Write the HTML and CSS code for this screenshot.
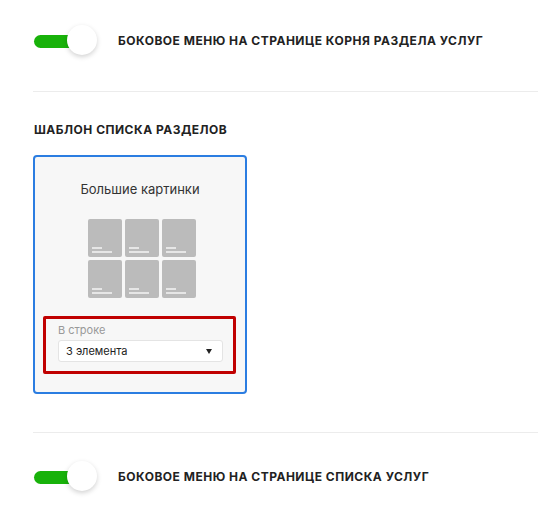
FILE: index.html
```html
<!DOCTYPE html>
<html lang="ru">
<head>
<meta charset="utf-8">
<link rel="stylesheet" href="styles.css">
</head>
<body>
<div class="page">
  <div class="switch-row first">
    <span class="switch"><span class="track"></span><span class="knob"></span></span>
    <span class="switch-label">Боковое меню на странице корня раздела услуг</span>
  </div>
  <div class="divider"></div>
  <div class="section">
    <div class="section-title">Шаблон списка разделов</div>
    <div class="card">
      <div class="card-title">Большие картинки</div>
      <div class="tiles">
        <div class="tile"><i class="l1"></i><i class="l2"></i></div>
        <div class="tile"><i class="l1"></i><i class="l2"></i></div>
        <div class="tile"><i class="l1"></i><i class="l2"></i></div>
        <div class="tile"><i class="l1"></i><i class="l2"></i></div>
        <div class="tile"><i class="l1"></i><i class="l2"></i></div>
        <div class="tile"><i class="l1"></i><i class="l2"></i></div>
      </div>
      <div class="option">
        <div class="option-label">В строке</div>
        <div class="select"><span>3 элемента</span><span class="arrow"></span></div>
      </div>
    </div>
  </div>
  <div class="divider second"></div>
  <div class="switch-row">
    <span class="switch"><span class="track"></span><span class="knob"></span></span>
    <span class="switch-label">Боковое меню на странице списка услуг</span>
  </div>
</div>
</body>
</html>
```
FILE: styles.css
```css
html, body { margin: 0; padding: 0; background: #fff; }
body { font-family: Inter, "Noto Sans", sans-serif; color: #222; width: 538px; height: 518px; overflow: hidden; }
.page { padding-left: 33px; }
.switch-row { display: flex; align-items: center; height: 30px; }
.switch-row.first { padding-top: 25px; }
.switch { position: relative; display: block; width: 64px; height: 30px; flex: none; }
.track { position: absolute; left: 1px; top: 10px; width: 56px; height: 13px; border-radius: 7px; background: #18b20a; }
.knob { position: absolute; left: 34px; top: 0; width: 30px; height: 30px; border-radius: 50%; background: #fff; box-shadow: 0 2px 5px rgba(0,0,0,0.18); }
.switch-label { margin-left: 21px; font-size: 12px; font-weight: 700; text-transform: uppercase; letter-spacing: 0.5px; color: #222; }
.divider { height: 1px; background: #ececec; margin-top: 36px; }
.divider.second { margin-top: 38px; margin-bottom: 28px; }
.section { padding-top: 31px; }
.section-title { font-size: 12px; font-weight: 700; text-transform: uppercase; letter-spacing: 0.5px; padding-left: 1px; line-height: 14px; }
.card { margin-top: 18px; width: 210px; height: 235px; border: 2px solid #2b7de1; border-radius: 4px; background: #f7f7f7; box-sizing: content-box; display: flex; flex-direction: column; align-items: center; }
.card-title { margin-top: 24px; font-size: 13px; color: #333; line-height: 16px; }
.tiles { margin-top: 22px; margin-left: 3px; display: grid; grid-template-columns: repeat(3, 34px); grid-auto-rows: 38px; gap: 3px; }
.tile { background: #bbbbbb; border-radius: 2px; position: relative; }
.tile i { position: absolute; left: 4px; height: 2px; background: #e6e6e6; }
.tile .l1 { top: 28px; width: 10px; }
.tile .l2 { top: 32px; width: 20px; }
.option { margin-top: 18px; align-self: flex-start; margin-left: 8px; width: 193px; height: 58px; border: 3px solid #c00000; border-radius: 2px; padding: 4px 0 0 12px; box-sizing: border-box; }
.option-label { font-size: 11px; color: #999; line-height: 14px; }
.select { margin-top: 3px; width: 165px; height: 22px; box-sizing: border-box; border: 1px solid #e4e4e4; border-radius: 3px; background: #fff; display: flex; align-items: center; justify-content: space-between; padding: 0 10px 0 7px; font-size: 11px; color: #222; }
.arrow { width: 0; height: 0; border-left: 3.5px solid transparent; border-right: 3.5px solid transparent; border-top: 5px solid #222; }
```
